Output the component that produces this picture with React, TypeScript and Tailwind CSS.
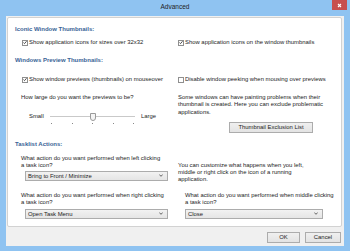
const font = { fontFamily: '"Liberation Sans", Arial, sans-serif' };

const Check = ({ on }: { on?: boolean }) => (
    <span className="w-[6px] h-[6px] border border-[#8f8f8f] bg-white flex items-center justify-center shrink-0">
        {on && (
            <svg width="5" height="5" viewBox="0 0 5 5">
                <path d="M0.6 2.6 L1.9 3.9 L4.4 0.9" stroke="#222" strokeWidth="1" fill="none" />
            </svg>
        )}
    </span>
);

const CheckRow = ({ on, label }: { on?: boolean; label: string }) => (
    <div className="flex items-center gap-[1px] h-[7px] leading-[7px] whitespace-nowrap">
        <Check on={on} />
        <span>{label}</span>
    </div>
);

const Header = ({ children, className = "" }: { children: string; className?: string }) => (
    <div className={"h-[7px] leading-[7px] text-[6px] font-bold text-[#3a6396] " + className}>{children}</div>
);

const Lines = ({ lines, className = "" }: { lines: string[]; className?: string }) => (
    <div className={"whitespace-nowrap " + className}>
        {lines.map((l) => (
            <div key={l} className="h-[7px] leading-[7px]">{l}</div>
        ))}
    </div>
);

const Combo = ({ value, className = "" }: { value: string; className?: string }) => (
    <div className={"h-[10px] border border-[#acacac] bg-gradient-to-b from-[#f2f2f2] to-[#e5e5e5] flex items-center justify-between pl-[2px] pr-[4px] " + className}>
        <span className="leading-[8px]">{value}</span>
        <svg width="4" height="3" viewBox="0 0 4 3">
            <path d="M0.3 0.5 L2 2.3 L3.7 0.5" stroke="#444" strokeWidth="0.8" fill="none" />
        </svg>
    </div>
);

const Button = ({ children, className = "" }: { children: string; className?: string }) => (
    <div className={"h-[11px] border border-[#acacac] bg-gradient-to-b from-[#f0f0f0] to-[#e3e3e3] flex items-center justify-center leading-[9px] " + className}>
        {children}
    </div>
);

const App = () => {
    return (
        <div className="w-[350px] h-[251px] bg-[#8fc3f1] flex flex-col text-[5.9px] text-[#1c1c1c] overflow-hidden" style={font}>
            {/* title bar */}
            <div className="h-[16px] relative flex items-center justify-center">
                <span className="text-[6.5px] text-[#222] -mt-[2px]">Advanced</span>
                <div className="absolute right-[3px] top-0 w-[15px] h-[10px] bg-[#c74f4f] flex items-center justify-center">
                    <svg width="5" height="5" viewBox="0 0 5 5">
                        <path d="M1 1 L4 4 M4 1 L1 4" stroke="#fff" strokeWidth="1.1" />
                    </svg>
                </div>
            </div>

            <div className="flex-1 mx-[6px] mb-[5px] bg-[#f0f0f0] flex flex-col">
                {/* main panel */}
                <div className="h-[210px] ml-[1px] mr-[2px] mt-[1px] bg-white border border-[#d2d2d2] rounded-[2px] pl-[7px] pt-[8px]">
                    <Header>Iconic Window Thumbnails:</Header>
                    <div className="grid grid-cols-[163px_1fr] mt-[6px]">
                        <div className="pl-[7px]">
                            <CheckRow on label="Show application icons for sizes over 32x32" />
                        </div>
                        <CheckRow on label="Show application icons on the window thumbnails" />
                    </div>

                    <Header className="mt-[11px]">Windows Preview Thumbnails:</Header>
                    <div className="grid grid-cols-[163px_1fr] mt-[12px]">
                        <div className="pl-[7px]">
                            <CheckRow on label="Show window previews (thumbnails) on mouseover" />
                        </div>
                        <CheckRow label="Disable window peeking when mousing over previews" />
                    </div>

                    <div className="grid grid-cols-[163px_1fr] mt-[11px]">
                        <div className="pl-[6px]">
                            <div className="h-[7px] leading-[7px]">How large do you want the previews to be?</div>
                            <div className="flex items-center mt-[12px] h-[7px] pl-[8px]">
                                <span className="w-[21px] leading-[7px]">Small</span>
                                <div className="relative w-[85px] h-[7px]">
                                    <div className="absolute left-0 right-0 top-[3px] h-[1px] bg-[#c9c9c9]" />
                                    <div className="absolute left-[40px] top-0 w-[6px] h-[8px] border border-[#9a9a9a] bg-[#f4f4f4] rounded-b-[3px]" />
                                    <div className="absolute left-0 right-0 top-[10px] flex justify-between px-[1px]">
                                        <span className="w-[1px] h-[1px] bg-[#888]" />
                                        <span className="w-[1px] h-[1px] bg-[#888]" />
                                        <span className="w-[1px] h-[1px] bg-[#888]" />
                                        <span className="w-[1px] h-[1px] bg-[#888]" />
                                        <span className="w-[1px] h-[1px] bg-[#888]" />
                                    </div>
                                </div>
                                <span className="ml-[6px] leading-[7px]">Large</span>
                            </div>
                        </div>
                        <div>
                            <div className="whitespace-nowrap">
                                <div className="h-[7.3px] leading-[7.3px]">Some windows can have painting problems when their</div>
                                <div className="h-[7.3px] leading-[7.3px]">thumbnail is created. Here you can exclude problematic</div>
                                <div className="h-[7.3px] leading-[7.3px]">applications.</div>
                            </div>
                            <Button className="ml-[51px] mt-[6px] w-[84px] h-[9px]">Thumbnail Exclusion List</Button>
                        </div>
                    </div>

                    <Header className="mt-[8px]">Tasklist Actions:</Header>
                    <div className="grid grid-cols-[163px_1fr] mt-[7px]">
                        <div className="pl-[6px]">
                            <Lines lines={["What action do you want performed when left clicking", "a task icon?"]} />
                            <Combo className="ml-[4px] mt-[2px] w-[143px]" value="Bring to Front / Minimize" />
                        </div>
                        <Lines
                            className="mt-[7px]"
                            lines={[
                                "You can customize what happens when you left,",
                                "middle or right click on the icon of a running",
                                "application.",
                            ]}
                        />
                    </div>

                    <div className="grid grid-cols-[163px_1fr] mt-[9px]">
                        <div className="pl-[6px]">
                            <Lines lines={["What action do you want performed when right clicking", "a task icon?"]} />
                            <Combo className="ml-[4px] mt-[3px] w-[143px]" value="Open Task Menu" />
                        </div>
                        <div className="pl-[7px]">
                            <Lines lines={["What action do you want performed when middle clicking", "a task icon?"]} />
                            <Combo className="mt-[3px] w-[138px]" value="Close" />
                        </div>
                    </div>
                </div>

                {/* footer */}
                <div className="flex justify-end gap-[5px] pr-[3px] mt-[5px]">
                    <Button className="w-[33px]">OK</Button>
                    <Button className="w-[36px]">Cancel</Button>
                </div>
            </div>
        </div>
    );
};

export default App;
